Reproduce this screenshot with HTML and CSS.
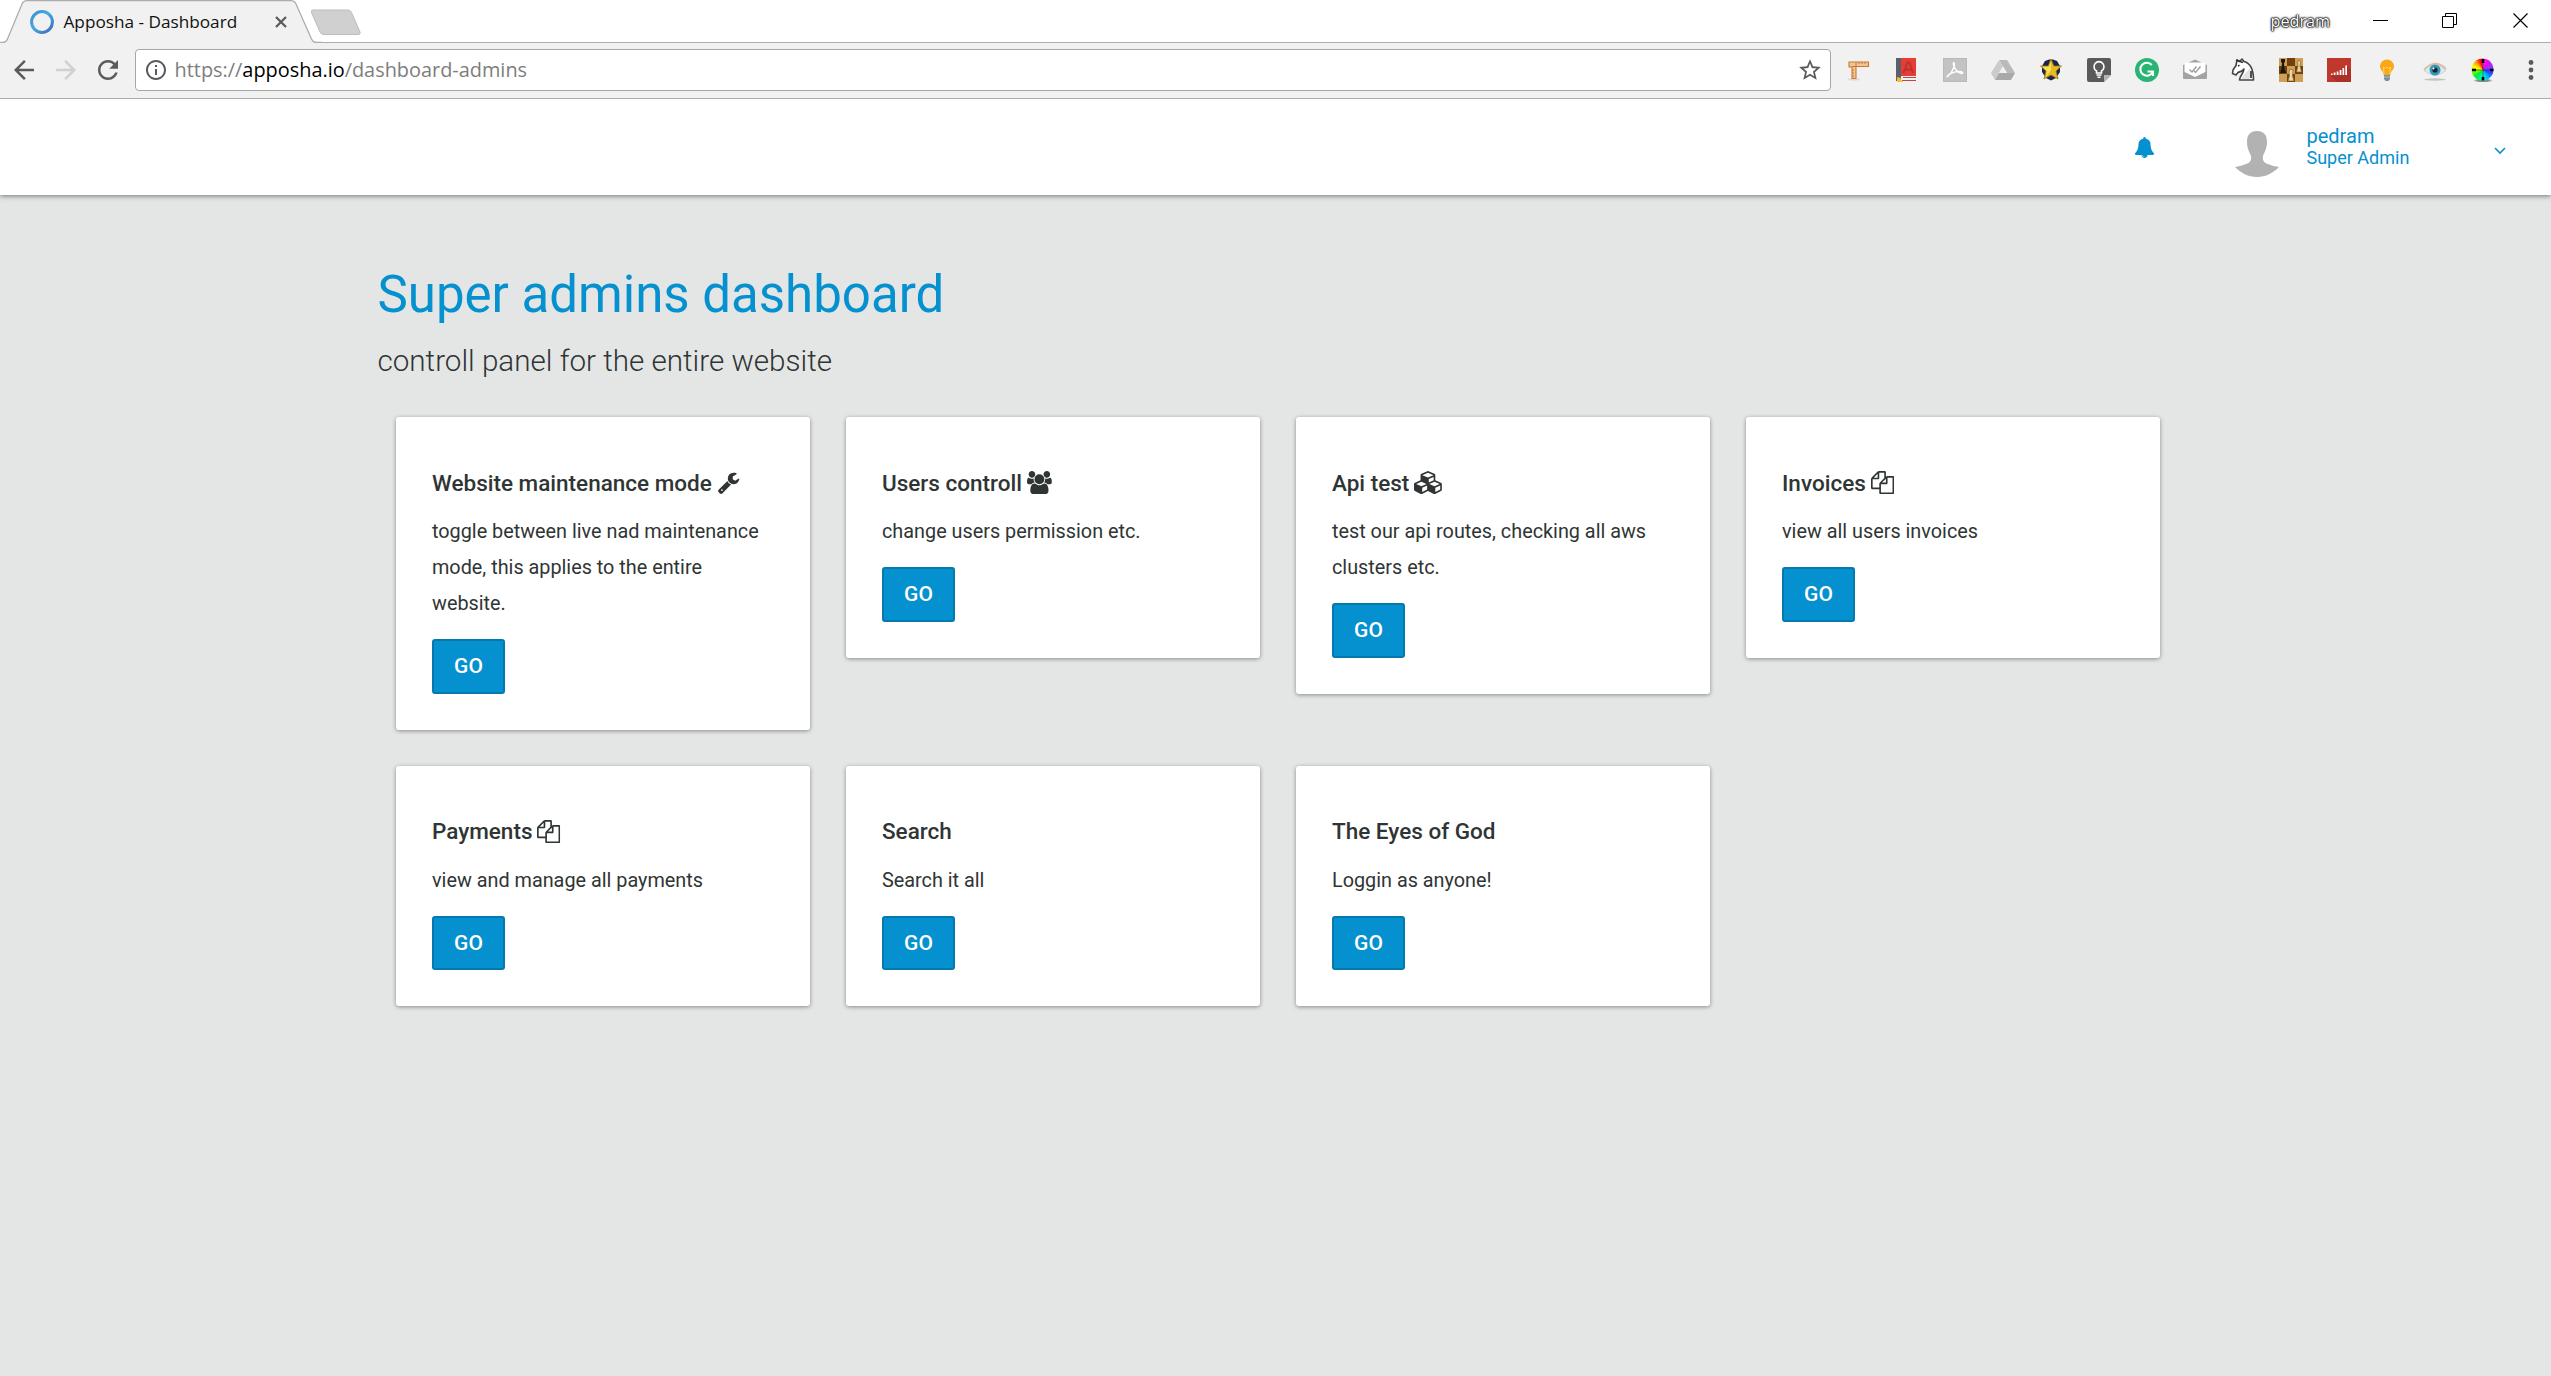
FILE: index.html
```html
<!DOCTYPE html>
<html lang="en">
<head>
<meta charset="utf-8">
<title>Apposha - Dashboard</title>
<link rel="stylesheet" href="styles.css">
</head>
<body>
<svg class="defs" width="0" height="0" aria-hidden="true">
  <symbol id="copy" viewBox="0 0 1792 1792"><path d="M1696 384q40 0 68 28t28 68v1216q0 40-28 68t-68 28h-960q-40 0-68-28t-28-68v-288h-544q-40 0-68-28t-28-68v-672q0-40 20-88t48-76l408-408q28-28 76-48t88-20h416q40 0 68 28t28 68v328q68-40 128-40h416zm-544 213l-299 299h299v-299zm-640-384l-299 299h299v-299zm196 647l316-316v-416h-384v416q0 40-28 68t-68 28h-416v640h512v-256q0-40 20-88t48-76zm956 804v-1152h-384v416q0 40-28 68t-68 28h-416v640h896z"/></symbol>
</svg>

<div class="tabstrip">
  <div class="tab">
    <svg class="tab-shape" width="322" height="43" viewBox="0 0 322 43">
      <path d="M0 43V42.500H3Q6 42.500 7.500 39L22 4Q23.500 .7 27 .7H291Q294.500 .7 296 4L311.500 39Q313 42.500 316 42.500H322V43Z" fill="#f1f1f1"/>
      <path d="M0 42.500H3Q6 42.500 7.500 39L22 4Q23.500 .7 27 .7H291Q294.500 .7 296 4L311.500 39Q313 42.500 316 42.500H322" fill="none" stroke="#adadad" stroke-width="1.300"/>
    </svg>
    <svg class="favicon" width="24" height="24" viewBox="0 0 24 24">
      <defs><linearGradient id="ring" x1="0" y1="0" x2="1" y2="1"><stop offset="0" stop-color="#3f8fd2"/><stop offset=".45" stop-color="#45a9df"/><stop offset="1" stop-color="#4169b8"/></linearGradient></defs>
      <circle cx="12" cy="12" r="10.400" fill="none" stroke="url(#ring)" stroke-width="3"/>
    </svg>
    <span class="tab-title">Apposha - Dashboard</span>
    <svg class="tab-close" width="12" height="12" viewBox="0 0 12 12"><path d="M1 1L11 11M11 1L1 11" stroke="#5a5a5a" stroke-width="2.200"/></svg>
  </div>
  <svg class="new-tab" width="52" height="28" viewBox="0 0 52 28"><path d="M3 1H38Q40.500 1 41.500 3.500L50 23Q51 25.500 48 25.500H14Q11 25.500 10 23L1.500 3.500Q.7 1 3 1Z" fill="#d0d0d0" stroke="#bcbcbc"/></svg>
  <div class="window-controls">
    <span class="profile">pedram</span>
    <svg width="16" height="16" viewBox="0 0 16 16"><path d="M0 7.500H15" stroke="#000"/></svg>
    <svg width="16" height="16" viewBox="0 0 16 16"><path d="M.5 3.500H11.500V14.500H.5ZM3.500 3.500V.5H14.500V11.500H11.500" fill="none" stroke="#000"/></svg>
    <svg width="16" height="16" viewBox="0 0 16 16"><path d="M.5 .5L14.500 14.500M14.500 .5L.5 14.500" stroke="#000" stroke-width="1.200"/></svg>
  </div>
</div>

<div class="toolbar">
  <div class="nav">
    <svg width="30" height="30" viewBox="0 0 24 24" fill="#5a5a5a"><path d="M20 11H7.830l5.590-5.590L12 4l-8 8 8 8 1.410-1.410L7.830 13H20v-2z"/></svg>
    <svg width="30" height="30" viewBox="0 0 24 24" fill="#d0d0d0"><path d="M12 4l-1.410 1.410L16.170 11H4v2h12.170l-5.580 5.590L12 20l8-8z"/></svg>
    <svg width="30" height="30" viewBox="0 0 24 24" fill="#5a5a5a"><path d="M17.650 6.350C16.200 4.900 14.210 4 12 4c-4.420 0-7.990 3.580-7.990 8s3.570 8 7.990 8c3.730 0 6.840-2.550 7.730-6h-2.080c-.82 2.330-3.040 4-5.650 4-3.310 0-6-2.690-6-6s2.690-6 6-6c1.660 0 3.140.69 4.220 1.780L13 11h7V4l-2.350 2.350z"/></svg>
  </div>
  <div class="omnibox">
    <svg width="24" height="24" viewBox="0 0 24 24" fill="#5a5a5a"><path d="M11 17h2v-6h-2v6zm1-15C6.480 2 2 6.480 2 12s4.480 10 10 10 10-4.480 10-10S17.520 2 12 2zm0 18c-4.410 0-8-3.590-8-8s3.590-8 8-8 8 3.590 8 8-3.590 8-8 8zM11 9h2V7h-2v2z"/></svg>
    <span class="url">https://<b>apposha.io</b>/dashboard-admins</span>
    <svg width="26" height="26" viewBox="0 0 24 24" fill="#5a5a5a"><path d="M22 9.240l-7.190-.62L12 2 9.190 8.630 2 9.240l5.460 4.730L5.820 21 12 17.270 18.180 21l-1.630-7.030L22 9.240zM12 15.400l-3.760 2.270 1-4.280-3.320-2.880 4.380-.38L12 6.100l1.710 4.040 4.380.38-3.320 2.880 1 4.280L12 15.400z"/></svg>
  </div>
  <div class="extensions">
    <!-- ruler -->
    <svg viewBox="0 0 24 24"><ellipse cx="7" cy="21.500" rx="6" ry="1" fill="#d9d9d9"/><path d="M2 4H21.500V8.500H9V20.500H5V9H2Z" fill="#f3c48e" stroke="#c57a3c" stroke-width="1.100"/><path d="M5 8.500H9V4M12 4v2M15 4v2M18 4v2M5 12h2M5 15h2M5 18h2" fill="none" stroke="#c57a3c"/></svg>
    <!-- dictionary -->
    <svg viewBox="0 0 24 24"><path d="M1 0H6V23H1Z" fill="#58606a"/><path d="M6 0H21V18H6Z" fill="#e53d35"/><path d="M6 18H21V23H6Z" fill="#e8f2f4"/><path d="M8 19.500H21M7 22.500H21" stroke="#c8423e" stroke-width="1.200"/><path d="M8.500 15L12.500 4.500H14.500L18 15M10 11.500H16.500" stroke="#b83230" stroke-width="1.800" fill="none"/><path d="M2 19L7 20.500 5.500 21.500 8 24H2Z" fill="#f5be2c"/></svg>
    <!-- pdf -->
    <svg viewBox="0 0 24 24"><path d="M0 0H24V24H0Z" fill="#b9b9b9"/><path d="M1 1H23V23H1Z" fill="#c3c3c3"/><path d="M4.500 18.500C7 17 11.500 10 11.500 6.500C11.500 3.500 9.800 4.500 10.500 7C11.500 11 15.500 15.500 18.500 15.500C21 15.500 19.500 13.300 16 13.500C12 13.700 7 15.500 5 17.500C4 18.500 4.200 19 4.500 18.500Z" fill="none" stroke="#fff" stroke-width="1.400"/></svg>
    <!-- drive -->
    <svg viewBox="0 0 24 24"><path d="M8 2H16L24 15H16Z" fill="#b9b9b9"/><path d="M8 2L12 8.500 4 22 0 15Z" fill="#cbcbcb"/><path d="M8 15H24L20 22H4Z" fill="#a9a9a9"/><path d="M12 8.500L16 15H8Z" fill="#f1f1f1"/></svg>
    <!-- sheriff star -->
    <svg viewBox="0 0 24 24"><path d="M6 3L10 1.500H14L18 3 21 8V14L17 20 12 22.500 7 20 3 14V8Z" fill="#1b2350"/><path d="M12 1L14.800 8H22.500L17 13 19 21 12 17 5 21 7 13 1.500 8H9.200Z" fill="#e8bb22" stroke="#9b7912" stroke-width=".8"/><path d="M12 3V12L7 19 8 13 3.500 8.800H10Z" fill="#f8de55"/></svg>
    <!-- keep -->
    <svg viewBox="0 0 24 24"><path d="M2 0H22Q24 0 24 2V17L17 24H2Q0 24 0 22V2Q0 0 2 0Z" fill="#5a5a5a"/><path d="M24 17L17 24V17Z" fill="#b5b5b5"/><path d="M9.500 15V13A5 5 0 1 1 14.500 13V15ZM9.500 17H14.500M10.500 19.300H13.500" fill="none" stroke="#fff" stroke-width="1.600"/></svg>
    <!-- grammarly -->
    <svg viewBox="0 0 24 24"><circle cx="12" cy="12" r="12" fill="#28b473"/><path d="M16.800 7A6.500 6.500 0 1 0 17.500 14.500M18 18V13.500H12.500" fill="none" stroke="#fff" stroke-width="2.100"/></svg>
    <!-- mail tracker -->
    <svg viewBox="0 0 24 24"><path d="M0 7L12 1.500 24 7V20Q24 21 23 21H1Q0 21 0 20Z" fill="#a3a3a3"/><path d="M1.500 6Q1.500 4.500 3 4.500H21Q22.500 4.500 22.500 6V14L12 19 1.500 14Z" fill="#fff"/><path d="M6.500 11.500L9 14 13.500 8.500M11 13L12.500 14.300 17.500 8.500" fill="none" stroke="#999" stroke-width="1.300"/></svg>
    <!-- knight -->
    <svg viewBox="0 0 24 24"><path d="M6 2L8.500 3.500 11 1 13 3.500C19 5 22.500 11 22.500 22H8.500C9 17 12.500 16 13 11C11 14 9 13.500 7 14.500L5 17 1.500 15.500 2 12 5 7.500Z" fill="#fff" stroke="#444" stroke-width="1.600" stroke-linejoin="round"/><path d="M5 2L12 4.500M7 8L8.500 7.300M20 13V20" stroke="#333" stroke-width="1.700"/><path d="M12 18L19 10V21H11Z" fill="#e1e1e1"/></svg>
    <!-- chess board -->
    <svg viewBox="0 0 24 24"><path d="M0 0H24V24H0Z" fill="#cda055"/><path d="M8 0H16V8H8ZM0 8H8V16H0ZM16 8H24V16H16ZM8 16H16V24H8Z" fill="#70400f"/><path d="M2 1H6V4L5 5 5.500 11 7 15H1L2.500 11 3 5 2 4Z" fill="#181818"/><path d="M20 2L21.500 4 21 8 22.500 14H17.500L19 8 18.500 4ZM11 11L14 12 13.500 18 15 23H9L10.500 18 10 14Z" fill="#ecd5a3" stroke="#8f652d" stroke-width=".7"/></svg>
    <!-- signal bars -->
    <svg viewBox="0 0 24 24"><path d="M0 0H24V24H0Z" fill="#bf372d"/><path d="M4 18L20 8 24 12V24H10Z" fill="#a93128"/><path d="M4 15.500H5.500V17H4ZM6.700 14.500H8.500V17H6.700ZM9.700 13.500H11.500V17H9.700ZM12.600 12H14.400V17H12.600ZM15.500 10H17.200V17H15.500ZM18.300 7.500H20V17H18.300Z" fill="#fff"/></svg>
    <!-- light bulb -->
    <svg viewBox="0 0 24 24"><path d="M8.500 17C8.500 13 5 12 5 8.500A7 7 0 0 1 19 8.500C19 12 15.500 13 15.500 17Z" fill="#fba719"/><path d="M9 16L8.500 9 10.500 10.500 12 9 13.500 10.500 15.500 9 15 16" fill="none" stroke="#ffd86a" stroke-width="1"/><path d="M9 17H15V21L13.500 23H10.500L9 21Z" fill="#77929b"/><path d="M9 19H15" stroke="#b5c4c9"/></svg>
    <!-- eye -->
    <svg viewBox="0 0 24 24"><ellipse cx="12" cy="21.500" rx="11" ry="1.200" fill="#c3c3c3"/><path d="M1 12Q12 0 23 11" fill="none" stroke="#e0b99f" stroke-width="1.800"/><path d="M1 12.500Q12 1 23 12.500Q12 22 1 12.500Z" fill="#dceaf0" stroke="#b7c9ce" stroke-width=".7"/><circle cx="12" cy="12" r="5.500" fill="#3c94b5"/><circle cx="12" cy="12" r="2.600" fill="#0c2635"/><circle cx="10.500" cy="10.500" r="1" fill="#fff"/></svg>
    <!-- colour wheel -->
    <span class="wheel"><svg viewBox="0 0 24 24"><path d="M12 1V5M12 19V23M1 12H5M19 12H23" stroke="#000" stroke-width="2.600"/><path d="M12 5V19M5 12H19" stroke="#222" stroke-width=".6"/></svg></span>
  </div>
  <svg class="menu" width="6" height="22" viewBox="0 0 6 22" fill="#5a5a5a"><circle cx="3" cy="3.500" r="2.400"/><circle cx="3" cy="11" r="2.400"/><circle cx="3" cy="18.500" r="2.400"/></svg>
</div>

<header class="header">
  <svg class="bell" width="21" height="21" viewBox="0 0 1792 1792"><path d="M912 1696q0-16-16-16-59 0-101.500-42.500t-42.500-101.500q0-16-16-16t-16 16q0 73 51.500 124.500t124.500 51.500q16 0 16-16zm816-288q0 52-38 90t-90 38h-448q0 106-75 181t-181 75-181-75-75-181h-448q-52 0-90-38t-38-90q50-42 91-88t85-119.500 74.500-158.500 50-206 19.500-260q0-152 117-282.500t307-158.500q-8-19-8-39 0-40 28-68t68-28 68 28 28 68q0 20-8 39 190 28 307 158.500t117 282.500q0 139 19.500 260t50 206 74.500 158.500 85 119.500 91 88z"/></svg>
  <svg class="avatar" width="44" height="46" viewBox="0 0 44 46"><path d="M22 0C29 0 32 4 32 11C32 18 29 22 28 25C27.300 31 29 33 44 36C38 42 31 46 22 46S6 42 0 36C15 33 16.700 31 16 25C15 22 12 18 12 11C12 4 15 0 22 0Z" fill="#b2b2b2"/></svg>
  <div class="user"><div class="user-name">pedram</div><div class="user-role">Super Admin</div></div>
  <svg class="chevron" width="12" height="8" viewBox="0 0 12 8"><path d="M1 1L6 6 11 1" fill="none" stroke="#0590cf" stroke-width="1.600"/></svg>
</header>

<main class="content">
  <h1>Super admins dashboard</h1>
  <h2>controll panel for the entire website</h2>
  <div class="cards">
    <section class="card">
      <h3>Website maintenance mode <svg class="icon" viewBox="0 0 1792 1792"><path d="M448 1472q0-26-19-45t-45-19-45 19-19 45 19 45 45 19 45-19 19-45zm644-420l-682 682q-37 37-90 37-52 0-91-37l-106-108q-38-36-38-90 0-53 38-91l681-681q39 98 114.500 173.500t173.500 114.500zm634-435q0 39-23 106-47 134-164.500 217.500t-258.500 83.500q-185 0-316.500-131.500t-131.500-316.500 131.500-316.500 316.500-131.500q58 0 121.500 16.500t107.500 46.500q16 11 16 28t-16 28l-293 169v224l193 107q5-3 79-48.500t135.500-81 70.500-35.500q15 0 23.500 10t8.500 25z"/></svg></h3>
      <p>toggle between live nad maintenance mode, this applies to the entire website.</p>
      <a class="button">GO</a>
    </section>
    <section class="card">
      <h3>Users controll <svg class="icon icon-users" viewBox="0 0 1920 1792"><path d="M593 896q-162 5-265 128h-134q-82 0-138-40.500t-56-118.500q0-353 124-353 6 0 43.500 21t97.500 42.500 119 21.500q67 0 133-23-5 37-5 66 0 139 81 256zm1071 637q0 120-73 189.500t-194 69.500h-874q-121 0-194-69.500t-73-189.500q0-53 3.500-103.500t14-109 26.500-108.500 43-97.500 62-81 85.500-53.500 111.500-20q10 0 43 21.500t73 48 107 48 135 21.500 135-21.500 107-48 73-48 43-21.500q61 0 111.500 20t85.500 53.500 62 81 43 97.500 26.500 108.500 14 109 3.500 103.500zm-1024-1277q0 106-75 181t-181 75-181-75-75-181 75-181 181-75 181 75 75 181zm704 384q0 159-112.500 271.500t-271.500 112.500-271.500-112.500-112.500-271.500 112.500-271.500 271.500-112.500 271.500 112.500 112.500 271.500zm576 225q0 78-56 118.500t-138 40.500h-134q-103-123-265-128 81-117 81-256 0-29-5-66 66 23 133 23 59 0 119-21.500t97.500-42.500 43.500-21q124 0 124 353zm-128-609q0 106-75 181t-181 75-181-75-75-181 75-181 181-75 181 75 75 181z"/></svg></h3>
      <p>change users permission etc.</p>
      <a class="button">GO</a>
    </section>
    <section class="card">
      <h3>Api test <svg class="icon icon-cubes" viewBox="0 0 2304 1792"><path d="M640 1632l384-192v-314l-384 164v342zm-64-454l404-173-404-173-404 173zm1088 454l384-192v-314l-384 164v342zm-64-454l404-173-404-173-404 173zm-448-293l384-165v-266l-384 164v267zm-64-379l441-189-441-189-441 189zm1088 518v416q0 36-19 67t-52 47l-448 224q-25 14-57 14t-57-14l-448-224q-4-2-7-4-2 2-7 4l-448 224q-25 14-57 14t-57-14l-448-224q-33-16-52-47t-19-67v-416q0-38 21.500-70t56.500-48l434-186v-400q0-38 21.500-70t56.500-48l448-192q23-10 50-10t50 10l448 192q35 16 56.500 48t21.500 70v400l434 186q36 16 57 48t21 70z"/></svg></h3>
      <p>test our api routes, checking all aws clusters etc.</p>
      <a class="button">GO</a>
    </section>
    <section class="card">
      <h3>Invoices <svg class="icon"><use href="#copy"/></svg></h3>
      <p>view all users invoices</p>
      <a class="button">GO</a>
    </section>
    <section class="card">
      <h3>Payments <svg class="icon"><use href="#copy"/></svg></h3>
      <p>view and manage all payments</p>
      <a class="button">GO</a>
    </section>
    <section class="card">
      <h3>Search</h3>
      <p>Search it all</p>
      <a class="button">GO</a>
    </section>
    <section class="card">
      <h3>The Eyes of God</h3>
      <p>Loggin as anyone!</p>
      <a class="button">GO</a>
    </section>
  </div>
</main>
</body>
</html>
```
FILE: styles.css
```css
* { box-sizing: border-box; }

body {
  margin: 0;
  min-height: 1376px;
  background: #e4e6e5;
  color: #2f3534;
  font-family: Roboto, sans-serif;
  overflow: hidden;
}

svg { display: block; flex: none; }
.defs { position: absolute; }

/* Browser window */
.tabstrip {
  display: flex;
  height: 43px;
  background: #fff;
  box-shadow: inset 0 -1px #adadad;
  font-family: "Open Sans", sans-serif;
}

.tab {
  position: relative;
  display: flex;
  align-items: center;
  width: 310px;
  height: 43px;
  padding-left: 30px;
}

.tab-shape { position: absolute; left: 0; top: 0; }
.favicon { position: relative; }

.tab-title {
  position: relative;
  width: 211px;
  margin-left: 9.5px;
  font-size: 17.2px;
  line-height: 43px;
  color: #111;
  white-space: nowrap;
}

.tab-close { position: relative; }
.new-tab { margin-top: 9px; position: relative; }

.window-controls {
  display: flex;
  align-items: center;
  height: 41px;
  margin-left: auto;
  padding-right: 22px;
}

.window-controls svg + svg { margin-left: 53px; }
.window-controls svg:last-child { margin-left: 55px; }

.profile {
  width: 102.5px;
  font-size: 16.2px;
  line-height: 40px;
  color: #fff;
  text-shadow: 0 0 1px #000, 0 0 1px #000, 0 0 2px #000, 0 0 2px #222, 0 0 3px #444;
}

.toolbar {
  display: flex;
  align-items: center;
  height: 56px;
  padding: 0 17px 2px 8.5px;
  background: #f1f1f1;
  border-bottom: 1px solid #ababab;
}

.nav { display: flex; gap: 12px; }

.omnibox {
  display: flex;
  align-items: center;
  width: 1696px;
  height: 42px;
  margin-left: 12.5px;
  padding: 0 7px 0 8px;
  background: #fff;
  border: 1px solid #a6a6a6;
  border-radius: 4px;
}

.url {
  flex: 1;
  margin-left: 6.5px;
  padding-top: 1px;
  font: 19.9px/40px "Open Sans", sans-serif;
  color: #7d7d7d;
}

.url b { font-weight: 400; color: #000; }

.extensions { display: flex; gap: 24px; margin-left: 15.5px; }
.extensions svg { width: 24px; height: 24px; }

.wheel {
  width: 24px;
  height: 24px;
  background: radial-gradient(ellipse 10px 2px at 12px 22.5px, #888 60%, transparent) no-repeat;
}

.wheel svg {
  border-radius: 50%;
  background: conic-gradient(#f33bb0, #e0e 30deg, #93f 70deg, #24f 110deg, #0bf 150deg, #0fc 180deg, #0e3 230deg, #af0 270deg, #ff0 290deg, #f90 320deg, #f02 345deg, #f33bb0);
  clip-path: circle(11px);
}

.menu { margin-left: auto; }

/* Page header */
.header {
  position: relative;
  display: flex;
  justify-content: flex-end;
  height: 96px;
  padding-right: 45.5px;
  background: #fff;
  box-shadow: 0 1px 5px rgba(0, 0, 0, .5);
  clip-path: inset(0 0 -10px 0);
  color: #0590cf;
}

.bell { margin-top: 38px; fill: #0590cf; }
.avatar { margin: 32px 0 0 80px; }
.user { width: 187px; margin: 26.5px 0 0 28px; line-height: 21.5px; }
.user-name { font-size: 20px; }
.user-role { font-size: 18px; }
.chevron { margin-top: 48px; }

/* Dashboard */
.content { padding: 70px 373px 0 377.5px; }

h1 {
  margin: 0;
  font-size: 51px;
  font-weight: 400;
  line-height: 60px;
  color: #0590cf;
}

h2 {
  margin: 17.5px 0 38.5px;
  font-size: 29.6px;
  font-weight: 300;
  line-height: 36px;
}

.cards {
  display: grid;
  grid-template-columns: repeat(4, 414px);
  gap: 36px;
  align-items: start;
  margin-left: 18.5px;
}

.card {
  padding: 49.5px 36px 36px;
  background: #fff;
  border-radius: 3px;
  box-shadow: 0 1px 4px rgba(0, 0, 0, .4);
}

h3 {
  display: flex;
  align-items: center;
  gap: 5px;
  margin: 0 0 15.5px;
  font-size: 22.5px;
  font-weight: 500;
  line-height: 32px;
}

.icon { width: 23.2px; height: 23.2px; fill: currentColor; }
.icon-users { width: 24.8px; }
.icon-cubes { width: 29.5px; }

p {
  margin: 0 0 17px;
  font-size: 19.82px;
  line-height: 36px;
}

.button {
  display: flex;
  align-items: center;
  justify-content: center;
  width: 73px;
  height: 54.67px;
  background: #0590cf;
  border: 2px solid #0479ae;
  border-radius: 3px;
  color: #fff;
  font-size: 21px;
  font-weight: 500;
}
```
